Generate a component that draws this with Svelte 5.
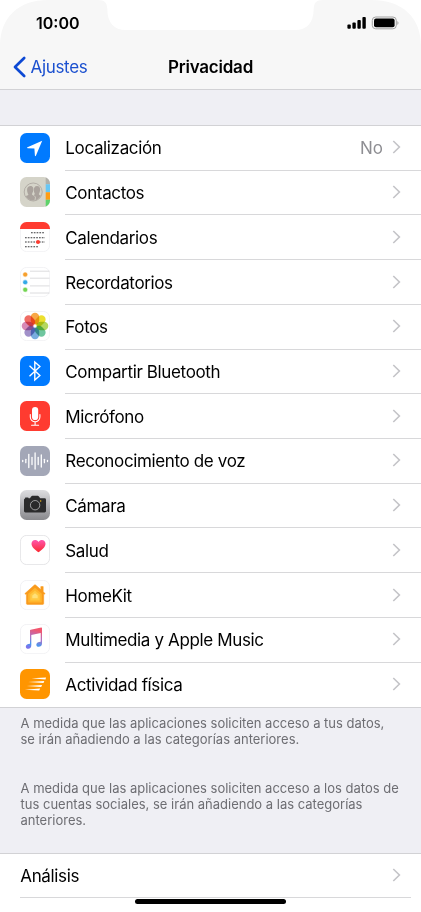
<script>
    const rows = [
        { icon: "location", label: "Localización", value: "No" },
        { icon: "contacts", label: "Contactos" },
        { icon: "calendar", label: "Calendarios" },
        { icon: "reminders", label: "Recordatorios" },
        { icon: "photos", label: "Fotos" },
        { icon: "bluetooth", label: "Compartir Bluetooth" },
        { icon: "microphone", label: "Micrófono" },
        { icon: "speech", label: "Reconocimiento de voz" },
        { icon: "camera", label: "Cámara" },
        { icon: "health", label: "Salud" },
        { icon: "homekit", label: "HomeKit" },
        { icon: "music", label: "Multimedia y Apple Music" },
        { icon: "fitness", label: "Actividad física" },
    ];

    const petals = ["#f7941d", "#e8d800", "#a4cf3a", "#4fb98a", "#5b9bd8", "#8c78bd", "#cf6fa5", "#ec4b42"];

    // [x, half height] of each bar of the waveform
    const bars = [[2.7, 0.5], [5.8, 1.7], [8.8, 6.5], [12, 3.5], [15.1, 8], [18.2, 3.5], [21.3, 6], [24.4, 1.7], [27.5, 0.5]];

    const tileColors = {
        location: "#007aff",
        contacts: "#d5d4c9",
        bluetooth: "#007aff",
        microphone: "#ff3b30",
        speech: "#a3a7b7",
        camera: "url(#camera-bg)",
        fitness: "#ff9500",
    };
</script>

{#snippet chevron()}
    <svg class="chevron" viewBox="0 0 9 14" width="9" height="14">
        <path d="M1.3 1 L7.4 7 L1.3 13" />
    </svg>
{/snippet}

{#snippet tile(name)}
    <svg class="tile" viewBox="0 0 30 30" width="30" height="30">
        {#if tileColors[name]}
            <rect width="30" height="30" rx="6.5" fill={tileColors[name]} />
        {:else}
            <rect x=".4" y=".4" width="29.2" height="29.2" rx="6.3" fill="#fff" stroke={name === "health" ? "#dedee1" : "#efeff1"} stroke-width=".8" />
        {/if}

        {#if name === "location"}
            <path d="M22.2 7.8 L15.9 22.7 Q15.2 23.7 14.9 22.5 L14.4 15.6 L7.6 15.3 Q6.3 14.9 7.5 14.2 Z" fill="#fff" />
        {:else if name === "contacts"}
            <g clip-path="url(#tile-clip)">
                <path d="M25.7 0 h5 v7.2 h-5z" fill="#b1b0aa" />
                <path d="M25.7 7.2 h5 v8 h-5z" fill="#68c7f5" />
                <path d="M25.7 15.2 h5 v7.5 h-5z" fill="#ff9d15" />
                <path d="M25.7 22.7 h5 v8 h-5z" fill="#5ed36a" />
            </g>
            <circle cx="13.2" cy="15" r="9" fill="none" stroke="#aaa39d" stroke-width=".8" />
            <g clip-path="url(#contacts-clip)" fill="#aaa39d">
                <path d="M10.1 9 C13.2 8.8 13.8 11.5 13.2 14 C12.9 15.4 12 16.4 12 17.4 C13 18.8 14.4 18.6 15 20 L14.5 24 H4 V19.5 C5.2 18.5 8.3 18.6 8.4 17.4 C6.9 15.4 5.9 9.4 10.1 9z" />
                <path d="M17 9 C21 9 20.7 14 18.8 17.1 C18.8 18.7 22 18.2 23 20 V25 H15.2 L15.8 20.5 C15.5 18.9 14.5 18.8 13.6 18.2 C14.4 17.9 14.8 17.5 14.8 16.8 C13.4 14.4 13.1 9 17 9z" />
            </g>
        {:else if name === "calendar"}
            <path d="M0 7 V6.5 A6.5 6.5 0 0 1 6.5 0 H23.5 A6.5 6.5 0 0 1 30 6.5 V7z" fill="#ff3b30" />
            <g stroke="#38383b" stroke-width="1.1" stroke-dasharray="1.7 1.1">
                <path d="M11 10.7 H25" />
                <path d="M5 15.7 H25" />
                <path d="M5 20 H25" />
                <path d="M5 24.8 H19" />
            </g>
            <circle cx="18" cy="20.1" r="2" fill="#ff3b30" />
        {:else if name === "reminders"}
            <g stroke="#d3d3d6" stroke-width=".8">
                <path d="M10 4.2 H29.5 M10 11.2 H29.5 M10 18.9 H29.5 M10 26 H29.5" />
            </g>
            <g stroke-width="1.2" stroke-opacity=".35">
                <circle cx="5.2" cy="7.6" r="2" fill="#f7a02d" stroke="#f7a02d" />
                <circle cx="5.2" cy="15.2" r="2" fill="#33a9e8" stroke="#33a9e8" />
                <circle cx="5.2" cy="22.7" r="2" fill="#74d552" stroke="#74d552" />
            </g>
        {:else if name === "photos"}
            <g class="petals">
                {#each petals as color, i}
                    <rect x="10.8" y="1.7" width="8.4" height="11.8" rx="4.2" fill={color} transform="rotate({i * 45} 15 15)" />
                {/each}
            </g>
            <circle cx="15" cy="15" r="1.2" fill="#fff" />
        {:else if name === "bluetooth"}
            <path d="M9.5 9.8 L19.9 19.4 L14.8 23.9 V6.1 L19.9 10.6 L9.5 20.2" fill="none" stroke="#fff" stroke-width="1.4" />
        {:else if name === "microphone"}
            <rect x="12" y="6" width="6.2" height="13" rx="3.1" fill="#fff" />
            <path d="M10.3 13.5 V16 A4.8 4.8 0 0 0 19.9 16 V13.5 M15.1 20.9 V24 M11.6 24.2 H18.6" fill="none" stroke="#fff" stroke-width="1.1" stroke-linecap="round" />
        {:else if name === "speech"}
            <g stroke="#fff" stroke-width="1.3" stroke-linecap="round">
                {#each bars as [x, h]}
                    <path d="M{x} {15 - h} V{15 + h}" />
                {/each}
            </g>
        {:else if name === "camera"}
            <path d="M5 8.5 L5.3 7.6 H8.2 L8.6 8.3 H9.9 L11.4 6.2 Q11.7 5.8 12.3 5.8 H17.8 Q18.4 5.8 18.7 6.2 L20.2 8.3 H24.6 Q26 8.3 26 9.7 V21 Q26 22.4 24.6 22.4 H5.4 Q4 22.4 4 21 V9.7 Q4 8.7 5 8.5z" fill="#2b2b2c" />
            <circle cx="15.1" cy="15.2" r="4.7" fill="#29292a" stroke="#a9a9aa" stroke-width=".9" />
            <circle cx="20.7" cy="11" r=".7" fill="#ffc21a" />
        {:else if name === "health"}
            <path d="M18.5 17.3 C15.5 15 11.5 12.3 11.5 8.7 C11.5 4.7 16.4 3.6 18.5 7 C20.6 3.6 25.5 4.7 25.5 8.7 C25.5 12.3 21.5 15 18.5 17.3z" fill="url(#heart)" />
        {:else if name === "homekit"}
            <path d="M4.9 13.6 L14.4 5 Q15 4.5 15.6 5 L20.8 9.6 V6.6 H23.2 V11.8 L25.1 13.5 L24.4 14.3 L23.7 13.9 V23.6 Q23.7 24.4 22.9 24.4 H7.2 Q6.4 24.4 6.4 23.6 V13.9 L5.4 14.3z" fill="#f99a1c" stroke="#f99a1c" stroke-width=".5" />
            <path d="M8.2 13.7 L15 7.7 L21.8 13.7 V22.6 H8.2z" fill="#ffb52d" />
            <path d="M10.3 14.6 L15 10.4 L19.7 14.6 V20.4 H10.3z" fill="#ffc943" />
            <path d="M12.3 15.6 L15 13.2 L17.7 15.6 V18.3 H12.3z" fill="#ffe078" />
        {:else if name === "music"}
            <path d="M10 6.6 Q10 5.9 10.7 5.7 L21.2 3.6 Q22 3.5 22 4.3 V19.6 C22 21.9 20.4 22.8 18.7 22.8 C17.2 22.8 16.3 21.9 16.3 20.7 C16.3 18.5 18.4 18.2 20.7 17.7 V9 L11.3 10.9 V21 C11.3 23.5 10.2 24.8 8.3 24.8 C6.7 24.8 5.8 23.9 5.8 22.7 C5.8 20.5 7.7 20.1 10 19.7z" fill="url(#note)" />
        {:else if name === "fitness"}
            <g fill="#fff">
                <path d="M11.5 9.2 L26 8.4 L25.5 10.4z" />
                <path d="M8.2 13 L24.3 12.1 L23.5 14.1z" />
                <path d="M6.8 16.9 L22.1 15.9 L21.2 17.9z" />
                <path d="M4.8 20.8 L20.1 19.5 L19.2 21.5z" />
            </g>
        {/if}
    </svg>
{/snippet}

<svg class="defs" width="0" height="0">
    <defs>
        <clipPath id="tile-clip"><rect width="30" height="30" rx="6.5" /></clipPath>
        <clipPath id="contacts-clip"><circle cx="13.2" cy="15" r="8.6" /></clipPath>
        <linearGradient id="camera-bg" x2="0" y2="1">
            <stop stop-color="#dddde0" />
            <stop offset="1" stop-color="#89898d" />
        </linearGradient>
        <linearGradient id="heart" x2="0" y2="1">
            <stop stop-color="#ff55ad" />
            <stop offset="1" stop-color="#fb292f" />
        </linearGradient>
        <linearGradient id="note" x1=".7" y1="0" x2=".45" y2="1">
            <stop offset=".1" stop-color="#f2566e" />
            <stop offset=".5" stop-color="#ad72c8" />
            <stop offset=".8" stop-color="#4798ee" />
            <stop offset="1" stop-color="#7c73ec" />
        </linearGradient>
    </defs>
</svg>

<main>
    <header>
        <svg class="frame" viewBox="0 0 421 60" width="421" height="60">
            <path d="M0 0 H48 C19 0 0 17 0 46z M421 0 H371 C402 0 421 17 421 46z" />
            <path d="M98 0 C105 0 107 3 107.3 9 C107.5 23 114 30 126 30 H295 C307 30 313.5 23 313.7 9 C314 3 316 0 323 0z" />
        </svg>
        <div class="status">
            <span class="time">10:00</span>
            <svg width="54" height="14" viewBox="0 0 54 14">
                <rect x="1.4" y="8.6" width="3.4" height="4.2" rx="1" />
                <rect x="6.4" y="6.6" width="3.4" height="6.2" rx="1" />
                <rect x="11.4" y="4" width="3.4" height="8.8" rx="1" />
                <rect x="16.4" y="1" width="3.4" height="11.8" rx="1" />
                <rect x="26.3" y="1" width="24" height="11.8" rx="3.4" fill="none" stroke="#a2a2a2" />
                <rect x="28" y="2.6" width="20.6" height="8.6" rx="2" />
                <path d="M51.4 5 Q53.6 6.9 51.4 8.9z" fill="#a2a2a2" />
            </svg>
        </div>
        <nav>
            <button class="back">
                <svg width="14" height="22" viewBox="0 0 14 22">
                    <path d="M11.2 2 L2 11 L11.2 20" />
                </svg>
                <span>Ajustes</span>
            </button>
            <h1>Privacidad</h1>
        </nav>
    </header>

    <ul class="list">
        {#each rows as row}
            <li>
                {@render tile(row.icon)}
                <div class="cell">
                    <span class="label">{row.label}</span>
                    {#if row.value}
                        <span class="value">{row.value}</span>
                    {/if}
                    {@render chevron()}
                </div>
            </li>
        {/each}
    </ul>

    <section class="notes">
        <p>A medida que las aplicaciones soliciten acceso a tus datos,<br />se irán añadiendo a las categorías anteriores.</p>
        <p>A medida que las aplicaciones soliciten acceso a los datos de<br />tus cuentas sociales, se irán añadiendo a las categorías<br />anteriores.</p>
    </section>

    <footer>
        <div class="cell analysis">
            <span class="label">Análisis</span>
            {@render chevron()}
        </div>
        <div class="home-bar"></div>
    </footer>
</main>

<style>
:global(body) {
    margin: 0;
    background: #fff;
}

main {
    width: 421px;
    height: 912px;
    overflow: hidden;
    background: #efeff4;
    font-family: Inter, "Liberation Sans", sans-serif;
    color: #000;
}

.defs {
    position: absolute;
}

header {
    position: relative;
    box-sizing: border-box;
    height: 90px;
    background: #f7f7f7;
    border-bottom: 1px solid #d2d2d5;
}

.frame {
    position: absolute;
    top: 0;
    left: 0;
    fill: #fff;
}

.status {
    position: relative;
    display: flex;
    justify-content: space-between;
    align-items: center;
    height: 46px;
    padding: 0 21px 0 36px;
}

.time {
    font-size: 16px;
    font-weight: 600;
}

nav {
    position: relative;
    display: grid;
    grid-template-columns: 1fr auto 1fr;
    align-items: center;
    height: 42px;
}

.back {
    display: flex;
    align-items: center;
    gap: 4px;
    margin: 0 0 0 12.5px;
    padding: 0;
    border: 0;
    background: none;
    color: #1b50cf;
    font: inherit;
    font-size: 17px;
    letter-spacing: -.32px;
}

.back path {
    fill: none;
    stroke: #0d49d4;
    stroke-width: 2.7;
    stroke-linecap: round;
    stroke-linejoin: round;
}

h1 {
    margin: 0;
    font-size: 17px;
    font-weight: 600;
    letter-spacing: -.22px;
}

.list {
    margin: 35px 0 0;
    padding: 0;
    list-style: none;
    background: #fff;
    border-top: 1px solid #d2d2d5;
    border-bottom: 1px solid #d2d2d5;
}

li {
    display: flex;
    align-items: center;
    height: 44.72px;
    padding-left: 20px;
}

.tile {
    flex: none;
    margin-right: 15px;
    margin-bottom: 1.6px;
}

.cell {
    box-sizing: border-box;
    flex: 1;
    display: flex;
    align-items: center;
    height: 100%;
    padding-right: 20px;
    border-bottom: 1px solid #d8d8da;
}

li:last-child .cell {
    border-bottom: 0;
}

.label {
    flex: 1;
    padding-top: 1px;
    padding-left: .3px;
    font-size: 17px;
    letter-spacing: -.36px;
}

.value {
    margin-right: 9px;
    padding-top: 1px;
    font-size: 17px;
    color: #8e8e93;
}

.chevron {
    margin-bottom: 1px;
    fill: none;
    stroke: #c4c4c8;
    stroke-width: 1.6;
}

.petals rect {
    mix-blend-mode: multiply;
    opacity: .82;
}

.notes {
    box-sizing: border-box;
    height: 145px;
    padding: 6.6px 20px 0 20.5px;
    color: #6d6d72;
    font-size: 13px;
    line-height: 16.3px;
    white-space: nowrap;
}

.notes p {
    margin: 0 0 32px;
}

footer {
    height: 59px;
    background: #fff;
    border-top: 1px solid #d2d2d5;
}

.analysis {
    height: 44px;
    margin: 0 10px 0 20px;
    padding-right: 10px;
}

.home-bar {
    width: 151px;
    height: 5px;
    margin: 1px auto 0;
    border-radius: 3px;
    background: #000;
}
</style>
